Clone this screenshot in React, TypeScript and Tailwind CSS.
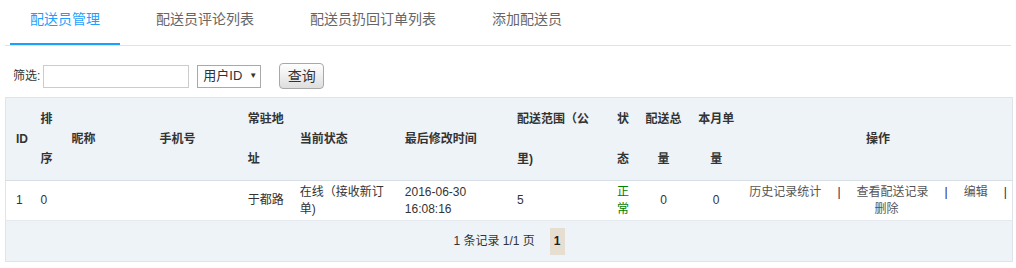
import React from 'react';

const tabs = ['配送员管理', '配送员评论列表', '配送员扔回订单列表', '添加配送员'];

// 列宽（像素），与截图对齐
const colWidths = [25, 31, 88, 88, 52, 105, 112, 100, 32, 49, 56, 268];

const Tabs: React.FC = () => (
  <div className="mx-[5px] flex h-[46px] gap-4 border-b border-[#e2e2e2] pl-[5px]">
    {tabs.map((t, i) => (
      <div
        key={t}
        className={
          i === 0
            ? 'h-[45px] border-b-2 border-[#1e9fff] px-5 pt-[9px] text-[14px] leading-5 text-[#1e9fff]'
            : 'h-[45px] px-5 pt-[9px] text-[14px] leading-5 text-[#666]'
        }
      >
        {t}
      </div>
    ))}
  </div>
);

const FilterBar: React.FC = () => (
  <div className="mt-[17px] flex h-[26px] items-center pl-[13px]">
    <span className="text-[12px] text-[#333]">筛选:</span>
    <input className="ml-[3px] h-[23px] w-[146px] border border-[#cccccc] bg-white outline-none" />
    <div className="ml-[8px] flex h-[23px] w-[64px] items-center border border-[#a9a9a9] bg-white pl-[5px] text-[13px] text-[#333]">
      <span>用户ID</span>
      <span className="ml-[7px] text-[8px] leading-none">▼</span>
    </div>
    <button className="ml-[18px] h-[26px] w-[45px] rounded-[4px] border border-[#a8a8a8] bg-gradient-to-b from-white to-[#dedede] text-[14px] text-[#333]">
      查询
    </button>
  </div>
);

const th = 'pl-[10px] text-left align-middle font-bold';
const td = 'pl-[10px] text-left align-middle';

const DataTable: React.FC = () => (
  <table className="mx-[5px] mt-[8px] w-[1008px] table-fixed border-collapse border border-[#dfe4ea] text-[12px] text-[#333]">
    <colgroup>
      {colWidths.map((w, i) => (
        <col key={i} style={{ width: `${w}px` }} />
      ))}
    </colgroup>
    <thead>
      <tr className="h-[83px] border-b border-[#d7dee6] bg-[#eef3f7] leading-[40px]">
        <th className={th}>ID</th>
        <th className={th}>排<br />序</th>
        <th className={th}>昵称</th>
        <th className={th}>手机号</th>
        <th className={th}>常驻地<br />址</th>
        <th className={th}>当前状态</th>
        <th className={th}>最后修改时间</th>
        <th className={th}>配送范围（公<br />里)</th>
        <th className={th}>状<br />态</th>
        <th className="text-center align-middle font-bold">配送总<br />量</th>
        <th className="text-center align-middle font-bold">本月单<br />量</th>
        <th className="text-center align-middle font-bold">操作</th>
      </tr>
    </thead>
    <tbody>
      <tr className="h-[40px] bg-white leading-[17px]">
        <td className={td}>1</td>
        <td className={td}>0</td>
        <td className={td}></td>
        <td className={td}></td>
        <td className={td}>于都路</td>
        <td className={td}>在线（接收新订<br />单)</td>
        <td className={td}>2016-06-30<br />16:08:16</td>
        <td className={td}>5</td>
        <td className={`${td} text-[#008000]`}>正<br />常</td>
        <td className="text-center align-middle">0</td>
        <td className="text-center align-middle">0</td>
        <td className="align-middle text-[#555]">
          <div className="flex justify-center">
            <span>历史记录统计</span>
            <span className="mx-[16px] text-[#2b1a4d]">|</span>
            <span>查看配送记录</span>
            <span className="mx-[16px] text-[#2b1a4d]">|</span>
            <span>编辑</span>
            <span className="ml-[16px] text-[#2b1a4d]">|</span>
          </div>
          <div className="pl-[17px] text-center">删除</div>
        </td>
      </tr>
      <tr className="h-[41px] border-t border-[#e6eaef] bg-[#eef3f7]">
        <td colSpan={12} className="text-center align-middle">
          <div className="flex items-center justify-center">
            <span>1 条记录 1/1 页</span>
            <span className="ml-[15px] flex h-[27px] items-center bg-[#e6dfd1] px-[4px] font-bold text-[#222]">1</span>
          </div>
        </td>
      </tr>
    </tbody>
  </table>
);

export default function App() {
  return (
    <div className="h-[268px] w-[1016px] overflow-hidden bg-white font-['Liberation_Sans','Noto_Sans_CJK_SC',sans-serif]">
      <Tabs />
      <FilterBar />
      <DataTable />
    </div>
  );
}
